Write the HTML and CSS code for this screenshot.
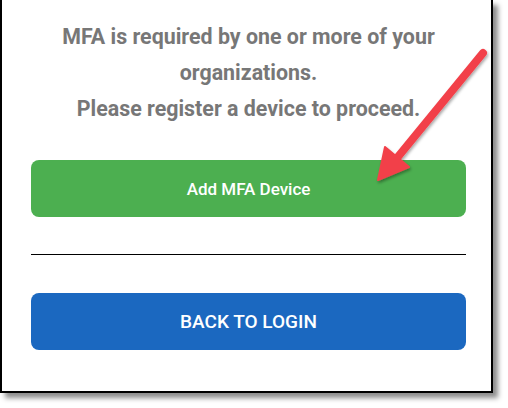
FILE: index.html
```html
<!DOCTYPE html>
<html>
<head>
<meta charset="utf-8">
<link rel="stylesheet" href="styles.css">
</head>
<body>
<div class="frame">
  <div class="content">
    <p class="message">MFA is required by one or more of your organizations.<br>Please register a device to proceed.</p>
    <button class="btn btn-green">Add MFA Device</button>
    <hr class="divider">
    <button class="btn btn-blue">BACK TO LOGIN</button>
  </div>
  <svg class="arrow" width="508" height="408" viewBox="0 0 508 408">
    <defs>
      <filter id="sh" x="-20%" y="-20%" width="140%" height="140%">
        <feDropShadow dx="1" dy="2" stdDeviation="1.5" flood-color="#000" flood-opacity="0.35"/>
      </filter>
    </defs>
    <g filter="url(#sh)" fill="#f2414a" stroke="#f2414a">
      <line x1="483" y1="53" x2="397" y2="158" stroke-width="8" stroke-linecap="round"/>
      <polygon points="378,180 385,147 409,167" stroke-width="2" stroke-linejoin="round"/>
    </g>
  </svg>
</div>
</body>
</html>
```
FILE: styles.css
```css
* { box-sizing: border-box; }
html, body { margin: 0; padding: 0; background: #fff; }
body { width: 508px; height: 408px; overflow: hidden; position: relative; font-family: Roboto, "Liberation Sans", sans-serif; }
.frame {
  width: 493px;
  height: 393px;
  border: 2px solid #000;
  border-top: none;
  background: #fff;
  box-shadow: 5px 5px 5px rgba(0,0,0,0.45);
}
.content {
  width: 435px;
  margin-left: 29px;
  padding-top: 19px;
  display: flex;
  flex-direction: column;
}
.message {
  margin: 0;
  text-align: center;
  color: #777;
  font-size: 21.4px;
  font-weight: 700;
  line-height: 36px;
}
.btn {
  width: 100%;
  border: none;
  border-radius: 8px;
  color: #fff;
  font-family: Roboto, "Liberation Sans", sans-serif;
  font-weight: 500;
  padding: 0;
}
.btn-green {
  margin-top: 33px;
  height: 57px;
  background: #4caf50;
  font-size: 17px;
}
.divider {
  margin: 37px 0 0;
  border: none;
  border-top: 1px solid #000;
  height: 0;
}
.btn-blue {
  margin-top: 38px;
  height: 57px;
  background: #1b68c0;
  font-size: 19px;
}
.arrow { position: absolute; left: 0; top: 0; pointer-events: none; }
```
